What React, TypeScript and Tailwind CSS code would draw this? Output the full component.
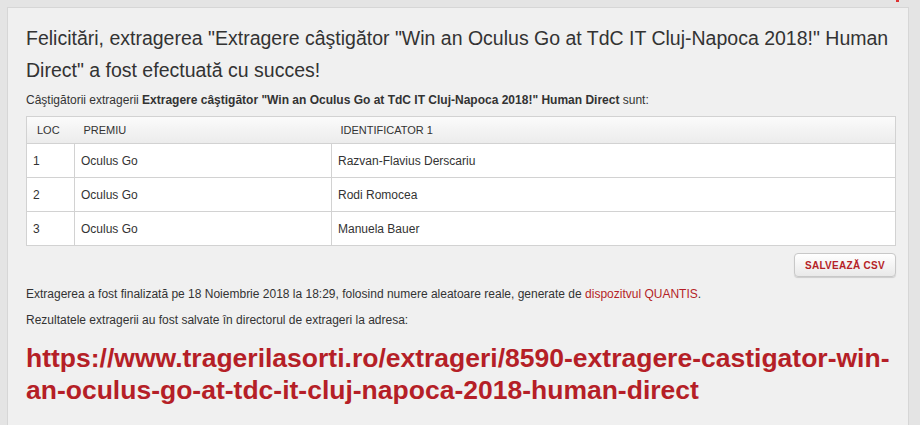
import React from "react";

const rows = [
  { loc: "1", premiu: "Oculus Go", id: "Razvan-Flavius Derscariu" },
  { loc: "2", premiu: "Oculus Go", id: "Rodi Romocea" },
  { loc: "3", premiu: "Oculus Go", id: "Manuela Bauer" },
];

export default function App() {
  return (
    <div className="w-[920px] h-[425px] overflow-hidden bg-[#e4e4e4] relative" style={{ fontFamily: '"Liberation Sans", Arial, sans-serif' }}>
      <div className="absolute left-[896px] top-0 w-[3px] h-[2px] bg-[#d33]" />
      <div className="pt-[7px] pl-[7px] w-[909px]">
        <div className="bg-[#f0f0f0] border border-[#d6d6d6] pl-[18px] pr-[12px] pt-[14px] pb-[40px] text-[#333]">
          <h1 className="text-[19.5px] leading-[32px] font-normal">
            Felicitări, extragerea "Extragere câştigător "Win an Oculus Go at TdC IT Cluj-Napoca 2018!" Human Direct" a fost efectuată cu succes!
          </h1>
          <p className="text-[12px] mt-[7px] leading-[14px]">
            Câştigătorii extragerii <b>Extragere câştigător "Win an Oculus Go at TdC IT Cluj-Napoca 2018!" Human Direct</b> sunt:
          </p>
          <table className="w-full mt-[9px] border-collapse border border-[#d2d2d2] bg-white text-[12px]">
            <thead>
              <tr className="h-[27px] bg-gradient-to-b from-[#fbfbfb] to-[#ececec] border-b border-[#d2d2d2] text-[11px]">
                <th className="w-[48px] text-left font-normal pl-[10px]">LOC</th>
                <th className="w-[257px] text-left font-normal pl-[9px]">PREMIU</th>
                <th className="text-left font-normal pl-[9px]">IDENTIFICATOR 1</th>
              </tr>
            </thead>
            <tbody>
              {rows.map((r) => (
                <tr key={r.loc} className="h-[34px] border-b border-[#d2d2d2]">
                  <td className="pl-[6px] border-r border-[#d2d2d2]">{r.loc}</td>
                  <td className="pl-[6px] border-r border-[#d2d2d2]">{r.premiu}</td>
                  <td className="pl-[6px]">{r.id}</td>
                </tr>
              ))}
            </tbody>
          </table>
          <div className="flex justify-end mt-[7px]">
            <button className="h-[24px] px-[10px] rounded-[4px] border border-[#c8c8c8] bg-gradient-to-b from-white to-[#e9e9e9] shadow-[0_1px_1px_rgba(0,0,0,0.15)] text-[10px] font-bold text-[#b51f27] tracking-[0.3px]">
              SALVEAZĂ CSV
            </button>
          </div>
          <p className="text-[12px] leading-[14px] mt-[10px]">
            Extragerea a fost finalizată pe 18 Noiembrie 2018 la 18:29, folosind numere aleatoare reale, generate de{" "}
            <span className="text-[#b51f27]">dispozitvul QUANTIS</span>.
          </p>
          <p className="text-[12px] leading-[14px] mt-[12px]">
            Rezultatele extragerii au fost salvate în directorul de extrageri la adresa:
          </p>
          <p className="text-[26.5px] leading-[32px] font-bold text-[#b51f27] mt-[15px]">
            https://www.tragerilasorti.ro/extrageri/8590-extragere-castigator-win-an-oculus-go-at-tdc-it-cluj-napoca-2018-human-direct
          </p>
        </div>
      </div>
    </div>
  );
}
